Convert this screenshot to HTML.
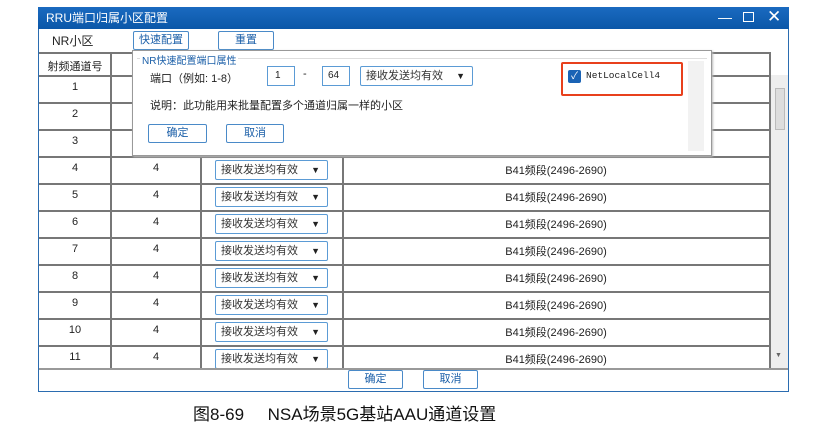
<!DOCTYPE html>
<html><head><meta charset="utf-8"><style>
*{margin:0;padding:0;box-sizing:border-box}
body{width:815px;height:433px;background:#fff;position:relative;overflow:hidden;font-family:"Liberation Sans","Noto Sans CJK SC",sans-serif;color:#222;font-size:11px}
.a{position:absolute}
.win{left:38px;top:7px;width:751px;height:385px;border:1px solid #2b6cb0;background:#fff}
.title{left:38px;top:7px;width:751px;height:22px;background:linear-gradient(#1a6ac0,#0b57a8);color:#fff;font-size:12px;line-height:22px;padding-left:8px}
.btn{border:1px solid #4a8ac8;background:#fff;color:#1b5fa8;text-align:center;font-size:11px;border-radius:2px}
.hl{position:absolute;height:2px;background:#777}
.vl{position:absolute;width:2px;background:#777}
.cell{position:absolute;text-align:center;font-size:11px}
.sel{position:absolute;left:215px;width:113px;height:20px;border:1px solid #5b9bd5;border-radius:2px;background:#fff;font-size:11px;line-height:18px;padding-left:5px;color:#333}
.sel::after{content:"▼";position:absolute;right:7px;top:0;font-size:9px;color:#222}
#tbl{position:absolute;left:0;top:0;width:815px;height:368px;overflow:hidden}
</style></head><body>
<div class="a win"></div>
<div class="a title">RRU端口归属小区配置</div>
<div class="a" style="left:718px;top:9px;color:#fff;font-size:14px;">—</div>
<div class="a" style="left:743px;top:12px;width:11px;height:10px;border:1.5px solid #fff"></div>
<div class="a" style="left:767px;top:7px;color:#fff;font-size:17px;">✕</div>
<div class="a" style="left:52px;top:32px;font-size:12px">NR小区</div>
<div class="a btn" style="left:133px;top:31px;width:56px;height:19px;line-height:17px">快速配置</div>
<div class="a btn" style="left:218px;top:31px;width:56px;height:19px;line-height:17px">重置</div>
<div id="tbl">
<div class="hl" style="left:39px;top:52px;width:731px"></div>
<div class="hl" style="left:39px;top:75px;width:731px"></div>
<div id="rows"></div>
<div class="vl" style="left:110px;top:52px;height:316px"></div>
<div class="vl" style="left:200px;top:52px;height:316px"></div>
<div class="vl" style="left:342px;top:52px;height:316px"></div>
<div class="vl" style="left:769px;top:52px;height:316px"></div>
<div class="a" style="left:771px;top:75px;width:17px;height:293px;background:#eee"></div>
<div class="a" style="left:775px;top:88px;width:10px;height:42px;background:#ddd;border:1px solid #bbb"></div>
<div class="a" style="left:775px;top:352px;font-size:7px;color:#666">▼</div>
<div class="cell" style="left:40px;top:58px;width:70px">射频通道号</div>
<div class="cell" style="left:343px;top:100px;width:426px;font-size:12px">归属小区</div>
</div>
<script>
var h='';
for(var i=1;i<=11;i++){var t=75+(i-1)*27;
if(i<11)h+='<div class="hl" style="left:39px;top:'+(t+27)+'px;width:731px"></div>';
h+='<div class="cell" style="left:40px;top:'+(t+6)+'px;width:70px">'+i+'</div>';
if(i>=4){h+='<div class="cell" style="left:112px;top:'+(t+6)+'px;width:88px">4</div>';
h+='<div class="sel" style="top:'+(t+4)+'px">接收发送均有效</div>';
h+='<div class="cell" style="left:343px;top:'+(t+6)+'px;width:426px">B41频段(2496-2690)</div>';}
}
document.getElementById('rows').outerHTML=h;
</script>
<div class="a" style="left:39px;top:368px;width:749px;height:2px;background:#999"></div>
<div class="a btn" style="left:348px;top:370px;width:55px;height:19px;line-height:17px">确定</div>
<div class="a btn" style="left:423px;top:370px;width:55px;height:19px;line-height:17px">取消</div>
<div class="a" style="left:132px;top:50px;width:580px;height:106px;background:#fff;border:1px solid #999;box-shadow:1px 1px 2px #bbb"></div>
<div class="a" style="left:137px;top:58px;width:570px;height:1px;background:#ddd"></div>
<div class="a" style="left:140px;top:52px;background:#fff;color:#1b5fa8;font-size:10px;padding:0 2px">NR快速配置端口属性</div>
<div class="a" style="left:150px;top:70px;font-size:11px">端口（例如: 1-8）</div>
<div class="a" style="left:267px;top:66px;width:28px;height:20px;border:1px solid #5b9bd5;font-size:10px;line-height:18px;padding-left:7px">1</div>
<div class="a" style="left:303px;top:68px;font-size:11px">-</div>
<div class="a" style="left:322px;top:66px;width:28px;height:20px;border:1px solid #5b9bd5;font-size:10px;line-height:18px;padding-left:5px">64</div>
<div class="sel" style="left:360px;top:66px;width:113px">接收发送均有效</div>
<div class="a" style="left:150px;top:97px;font-size:11px">说明：此功能用来批量配置多个通道归属一样的小区</div>
<div class="a btn" style="left:148px;top:124px;width:59px;height:19px;line-height:17px">确定</div>
<div class="a btn" style="left:226px;top:124px;width:58px;height:19px;line-height:17px">取消</div>
<div class="a" style="left:688px;top:61px;width:16px;height:90px;background:#f2f2f2"></div>
<div class="a" style="left:561px;top:62px;width:122px;height:34px;border:2px solid #e8401c;border-radius:2px"></div>
<div class="a" style="left:568px;top:70px;width:13px;height:13px;background:#1a63b5;border-radius:2px;color:#fff;font-size:10px;line-height:13px;text-align:center">✓</div>
<div class="a" style="left:586px;top:70px;font-family:'Liberation Mono',monospace;font-size:9.5px">NetLocalCell4</div>
<div class="a" style="left:193px;top:400px;font-size:17px;color:#111">图8-69&nbsp;&nbsp;&nbsp;&nbsp;&nbsp;NSA场景5G基站AAU通道设置</div>
</body></html>
